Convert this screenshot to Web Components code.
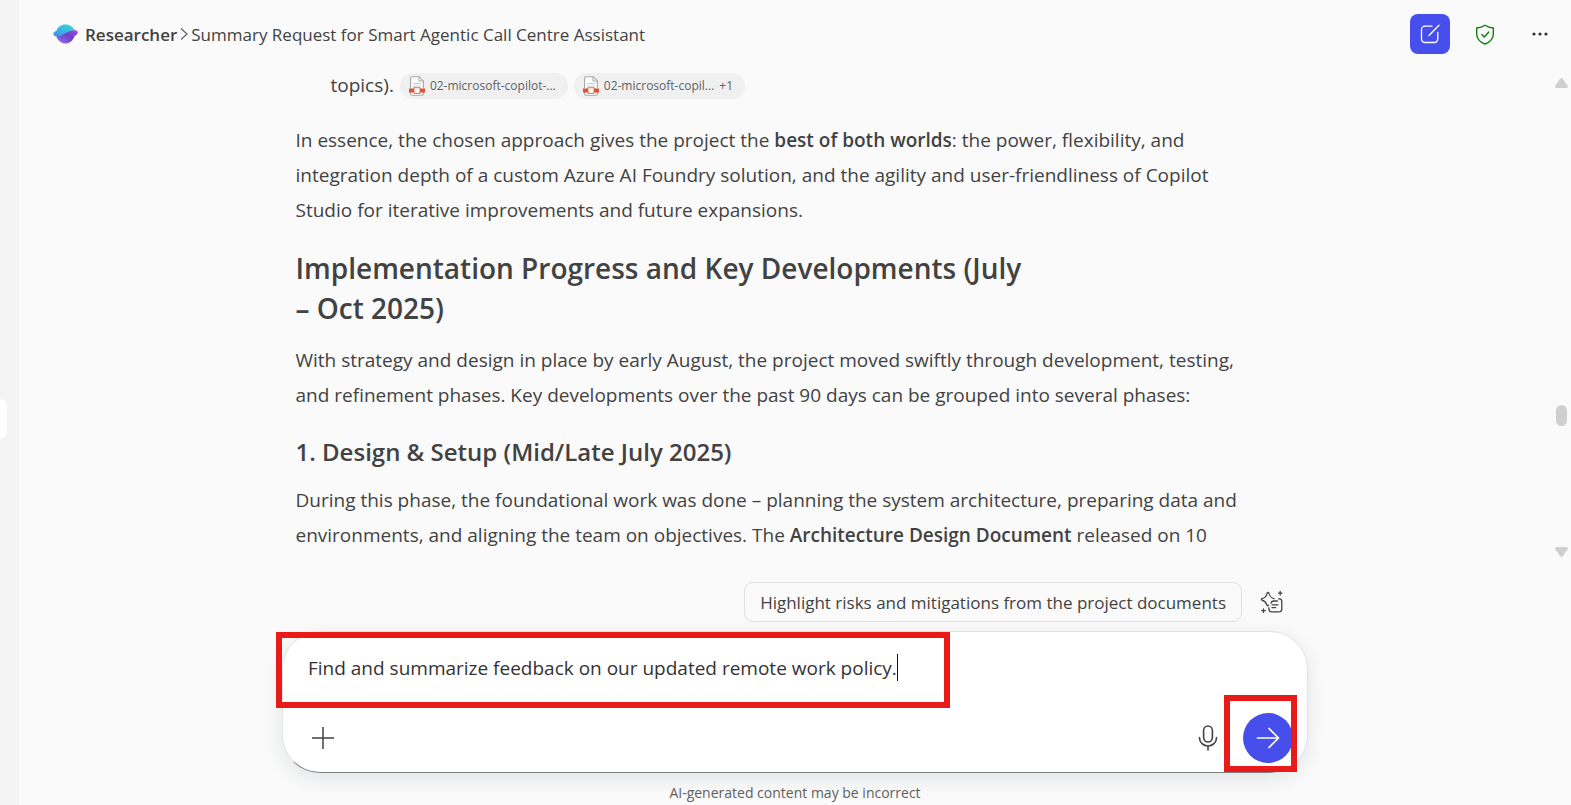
<!DOCTYPE html>
<html lang="en">
<head>
<meta charset="utf-8">
<title>Researcher</title>
<style>
  html, body { height: 100%; margin: 0; }
  body { background: #fafafa; font-family: "Open Sans", "Noto Sans", sans-serif; color: #424242; overflow: hidden; }
</style>
</head>
<body>
<app-shell>
  <side-rail slot="rail"></side-rail>
  <chat-header slot="header" agent="Researcher">Summary Request for Smart Agentic Call Centre Assistant</chat-header>
  <chat-article slot="body"></chat-article>
  <scroll-bar slot="scroll"></scroll-bar>
  <suggestion-row slot="footer">Highlight risks and mitigations from the project documents</suggestion-row>
  <chat-composer slot="footer" value="Find and summarize feedback on our updated remote work policy."></chat-composer>
  <ai-note slot="footer">AI-generated content may be incorrect</ai-note>
</app-shell>

<script>
const define = (name, html, setup) => {
  const template = document.createElement('template');
  template.innerHTML = `<style>*{box-sizing:border-box}button{font:inherit;color:inherit;border:0;padding:0;background:none;cursor:pointer}svg{display:block}</style>${html}`;
  customElements.define(name, class extends HTMLElement {
    constructor() {
      super();
      this.attachShadow({ mode: 'open' }).append(template.content.cloneNode(true));
    }
    connectedCallback() { if (setup) setup(this, this.shadowRoot); }
  });
};

define('app-shell', `
<style>
  :host { display: grid; grid-template-columns: 19px 1fr; height: 100vh; }
  main { display: flex; flex-direction: column; min-width: 0; min-height: 0; background: #fafafa; }
  .body { flex: 1; min-height: 0; display: flex; }
  .article { flex: 1; min-width: 0; overflow: hidden; }
  .footer { flex: none; width: calc(100% - 48px); max-width: 1026px; margin: 0 auto; display: flex; flex-direction: column; }
</style>
<slot name="rail"></slot>
<main>
  <slot name="header"></slot>
  <div class="body"><div class="article"><slot name="body"></slot></div><slot name="scroll"></slot></div>
  <div class="footer"><slot name="footer"></slot></div>
</main>`);

define('side-rail', `
<style>
  :host { display: flex; align-items: center; background: #f4f4f4; }
  button { width: 7px; height: 40px; margin-top: 32px; background: #fff; border-radius: 0 10px 10px 0; }
</style>
<button aria-label="Open navigation"></button>`);

define('chat-header', `
<style>
  :host { display: block; flex: none; }
  header { height: 68px; padding: 0 11px 0 34px; display: flex; align-items: center; }
  nav { display: flex; align-items: center; flex: 1; font-size: 17px; line-height: 24px; white-space: nowrap; }
  a { color: inherit; text-decoration: none; font-weight: 600; margin-left: 7px; }
  a, .title { padding-top: 2px; }
  .chev { margin: 0 2px; }
  .actions { display: flex; align-items: center; gap: 15px; }
  button { width: 40px; height: 40px; display: grid; place-items: center; border-radius: 8px; }
  .new { background: #464feb; color: #fff; }
</style>
<header>
  <nav aria-label="Breadcrumb">
    <svg width="25" height="20" viewBox="0 0 25 20">
      <defs>
        <linearGradient id="t" x1="0" y1="1" x2="1" y2="0"><stop offset="0" stop-color="#4787ed"/><stop offset=".45" stop-color="#36b5e4"/><stop offset="1" stop-color="#3fd9d0"/></linearGradient>
        <linearGradient id="b" x1="0" y1="1" x2="1" y2="0"><stop offset="0" stop-color="#9a78f5"/><stop offset=".55" stop-color="#6b3fcb"/><stop offset=".85" stop-color="#9446dc"/><stop offset="1" stop-color="#d25bf0"/></linearGradient>
      </defs>
      <path fill="url(#b)" d="M3.200 12c2.500.3 5.200-1.300 8.300-3.100 3.400-2 6.400-2.900 10.300-2.800 2.600.1 3.700 1.900 2.600 3.700-.6 1-1.700 1.800-2.900 2.400-1.300 4-4.800 7.300-9.100 7.300-4.200 0-7.800-3.400-9.200-7.500Z"/>
      <path fill="url(#t)" d="M3.400 6.800C4.700 2.900 8.200.5 12.400.5c4.300 0 7.800 2.500 9.200 5.700-4.200-.1-7.500 1.900-10.800 3.900C7.600 12 4.600 13.200 2.100 12.300-.6 11.300-.2 8 3.400 6.800Z"/>
    </svg>
    <a href="#"></a>
    <svg class="chev" width="10" height="14" viewBox="0 0 10 14" fill="none" stroke="#616161" stroke-width="1.200"><path d="M2 1.500 8 7l-6 5.500"/></svg>
    <span class="title"><slot></slot></span>
  </nav>
  <div class="actions">
    <button class="new" aria-label="New chat"><svg width="20" height="20" viewBox="0 0 20 20" fill="none" stroke="currentColor" stroke-width="1.300" stroke-linecap="round"><path d="M12 2.200H5A3.500 3.500 0 0 0 1.500 5.700V15A3.500 3.500 0 0 0 5 18.500h9.300a3.500 3.500 0 0 0 3.500-3.500V8.500M9 11.500 19 1.200"/></svg></button>
    <button aria-label="Protected"><svg width="20" height="21" viewBox="0 0 20 21" fill="none" stroke="#107c10" stroke-width="1.400" stroke-linejoin="round" stroke-linecap="round"><path d="M10 1.300c2.300 1.600 5 2.500 8.300 2.700v6c0 4.800-3 8-8.300 10-5.300-2-8.300-5.200-8.300-10V4C5 3.800 7.700 2.900 10 1.300ZM6.800 10.600 9.200 13l4.600-5"/></svg></button>
    <button aria-label="More"><svg width="18" height="6" viewBox="0 0 18 6" fill="#333"><circle cx="3" cy="3" r="1.600"/><circle cx="9" cy="3" r="1.600"/><circle cx="15" cy="3" r="1.600"/></svg></button>
  </div>
</header>`, (host, root) => { root.querySelector('a').textContent = host.getAttribute('agent'); });

define('file-chip', `
<style>
  :host { display: inline-flex; }
  button { display: flex; align-items: center; gap: 5px; height: 26px; padding: 0 12px 0 9px; border-radius: 13px; background: #f0f0f0; color: #616161; font-size: 12px; line-height: 18px; white-space: nowrap; }
  .more:empty { display: none; }
</style>
<button>
  <svg width="16" height="20" viewBox="0 0 16 20" fill="none">
    <path d="M1.600 12V2.200Q1.600.7 3.100.7h7.100l4.200 4.200V12M1.600 16v1.800q0 1.500 1.500 1.500h9.800q1.500 0 1.500-1.500V16" fill="#fff" stroke="#a6a6a6" stroke-width="1.100"/>
    <path d="M10 .8V5h4.300" stroke="#a6a6a6"/><path d="M4 7.500h8M4 10h8" stroke="#c8c8c8"/>
    <path d="M0 12.500h5v4H0zM11 12.500h5v4h-5z" fill="#d9532c"/><rect x="5" y="11.700" width="6" height="5.600" fill="#fff" stroke="#e2714f"/>
  </svg>
  <span><slot></slot></span><span class="more"></span>
</button>`, (host, root) => { root.querySelector('.more').textContent = host.getAttribute('more') || ''; });

define('chat-article', `
<style>
  :host { display: block; }
  article { width: calc(100% - 48px); max-width: 998px; margin: 0 auto; padding-left: 9px; }
  p { margin: 0; font-size: 19px; line-height: 35px; }
  .tail { display: flex; align-items: center; gap: 6px; padding-left: 35px; margin-bottom: 20px; }
  h2 { font-size: 28px; line-height: 40px; font-weight: 600; margin: 20px 0 15px; }
  h3 { font-size: 24px; line-height: 30px; font-weight: 600; margin: 24px 0 16px; }
  b { font-weight: 600; }
</style>
<article>
  <p class="tail">topics). <file-chip>02-microsoft-copilot-...</file-chip><file-chip more="+1">02-microsoft-copil...</file-chip></p>
  <p>In essence, the chosen approach gives the project the <b>best of both worlds</b>: the power, flexibility, and<br>integration depth of a custom Azure AI Foundry solution, and the agility and user-friendliness of Copilot<br>Studio for iterative improvements and future expansions.</p>
  <h2>Implementation Progress and Key Developments (July<br>– Oct 2025)</h2>
  <p>With strategy and design in place by early August, the project moved swiftly through development, testing,<br>and refinement phases. Key developments over the past 90 days can be grouped into several phases:</p>
  <h3>1. Design &amp; Setup (Mid/Late July 2025)</h3>
  <p>During this phase, the foundational work was done – planning the system architecture, preparing data and<br>environments, and aligning the team on objectives. The <b>Architecture Design Document</b> released on 10</p>
</article>`);

define('scroll-bar', `
<style>
  :host { flex: none; display: flex; flex-direction: column; align-items: center; width: 19px; padding: 10px 0 0; margin-bottom: 25px; }
  i { width: 11px; height: 21px; border-radius: 6px; background: #cfcfcf; }
  .a { flex: 316; } .b { flex: 120; }
</style>
<svg width="13" height="10" viewBox="0 0 13 10" fill="#cfcfcf"><path d="M5.300.8q1.200-1.400 2.400 0l4.900 6.800q.9 2.200-1.300 2.400H1.700Q-.5 9.800.4 7.600Z"/></svg>
<span class="a"></span><i></i><span class="b"></span>
<svg width="13" height="10" viewBox="0 0 13 10" fill="#cfcfcf"><path d="M5.300 9.200q1.200 1.400 2.400 0l4.900-6.800Q13.500.2 11.300 0H1.700Q-.5.2.4 2.400Z"/></svg>`);

define('suggestion-row', `
<style>
  :host { display: flex; justify-content: flex-end; align-items: center; gap: 18px; padding-right: 24px; margin-bottom: 9px; }
  .pill { height: 40px; padding: 2px 15px 0; border: 1px solid #e0e0e0; border-radius: 9px; font-size: 17px; line-height: 24px; white-space: nowrap; }
</style>
<button class="pill"><slot></slot></button>
<button aria-label="Prompt gallery"><svg width="24" height="24" viewBox="0 0 24 24" fill="none" stroke="#424242" stroke-width="1.300" stroke-linejoin="round" stroke-linecap="round">
  <path d="M8.500 15.200c-.6.9-1.300.7-1.600-.1-.9-3-1.700-3.800-4.900-4.900-.8-.4-.8-1.200 0-1.500 3.300-1.100 4.100-2 5.200-5.600.3-.9 1.300-.9 1.600 0 1.100 3.600 2 4.500 5.200 5.600"/>
  <path d="M18.600 8.800h.6a2.600 2.600 0 0 1 2.600 2.600v7.300a3.200 3.200 0 0 1-3.200 3.200h-6.500a3.200 3.200 0 0 1-3.200-3.200v-.9M11 13.200c.4-1.700 1.400-2.200 2.800-2.200h3.600M12 14.800h6M12 17.600h3.600"/>
  <path d="M20.200 1.500v3.400M18.500 3.200h3.400M3.500 19v3.400M1.800 20.700h3.400"/></svg></button>`);

define('chat-composer', `
<style>
  :host { display: block; position: relative; }
  form { height: 142px; background: #fff; border: 1px solid #e3e3e3; border-bottom-color: #808080; border-radius: 38px; box-shadow: 0 6px 20px rgba(20,40,60,.10); display: flex; flex-direction: column; }
  .field { display: flex; align-items: center; height: 71px; padding-left: 25px; }
  input { border: 0; outline: 0; padding: 0; background: none; font: inherit; font-size: 19px; color: #333; field-sizing: content; }
  .caret { width: 1px; height: 27px; background: #111; }
  .tools { display: flex; align-items: center; height: 69px; padding: 0 14px 0 28px; }
  .send { width: 50px; height: 50px; border-radius: 50%; background: #464feb; display: grid; place-items: center; margin-left: 25px; }
  .mic { margin-left: auto; }
  .mark { position: absolute; border: 6px solid #e81a1a; pointer-events: none; }
  .mark.text { left: -6px; top: 1px; width: 674px; height: 76px; }
  .mark.go { right: 11px; bottom: 1px; width: 73px; height: 77px; }
</style>
<form onsubmit="return false">
  <div class="field"><input type="text" aria-label="Message"><span class="caret"></span></div>
  <div class="tools">
    <button type="button" aria-label="Add"><svg width="24" height="24" viewBox="0 0 24 24" stroke="#424242" stroke-width="1.500"><path d="M12 1v22M1 12h22"/></svg></button>
    <button type="button" class="mic" aria-label="Dictate"><svg width="20" height="26" viewBox="0 0 20 26" fill="none" stroke="#424242" stroke-width="1.600" stroke-linecap="round"><rect x="5.600" y="1" width="8.800" height="16" rx="4.400"/><path d="M1.500 12.500v.5a8.500 8 0 0 0 17 0v-.5M10 21.200v3.800"/></svg></button>
    <button class="send" aria-label="Send"><svg width="24" height="22" viewBox="0 0 24 22" fill="none" stroke="#fff" stroke-width="1.700" stroke-linecap="round" stroke-linejoin="round"><path d="M1.500 11h21M13 1.500l9.500 9.500-9.500 9.500"/></svg></button>
  </div>
</form>
<div class="mark text"></div><div class="mark go"></div>`, (host, root) => { root.querySelector('input').value = host.getAttribute('value'); });

define('ai-note', `
<style>:host { display: block; text-align: center; font-size: 14px; line-height: 20px; color: #616161; padding: 10px 0 2px; }</style>
<slot></slot>`);
</script>
</body>
</html>
